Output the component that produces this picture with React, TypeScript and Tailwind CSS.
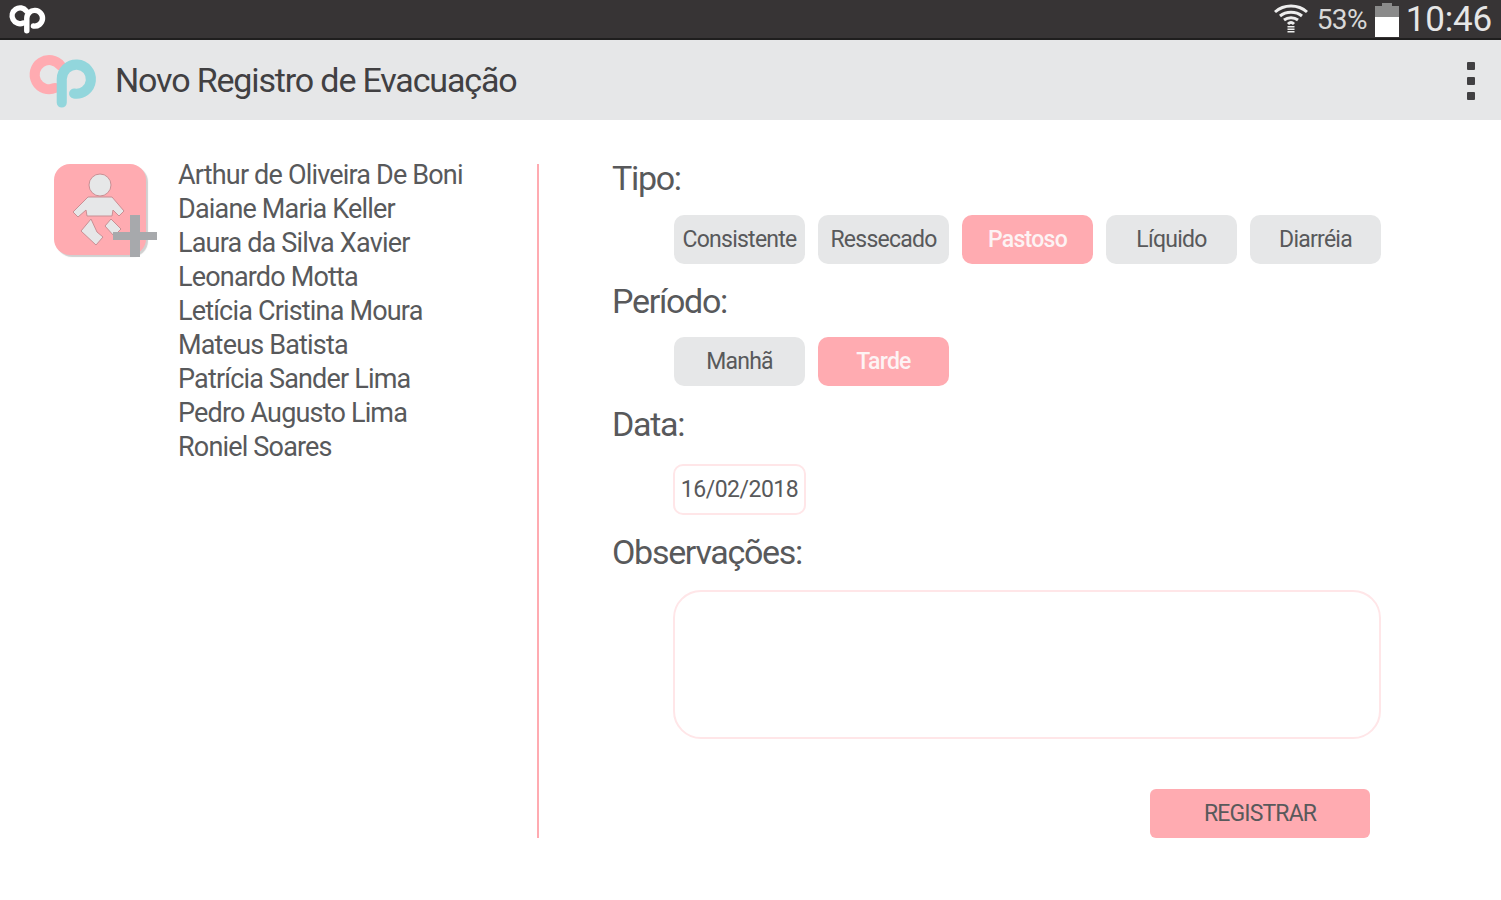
const names = [
  "Arthur de Oliveira De Boni",
  "Daiane Maria Keller",
  "Laura da Silva Xavier",
  "Leonardo Motta",
  "Letícia Cristina Moura",
  "Mateus Batista",
  "Patrícia Sander Lima",
  "Pedro Augusto Lima",
  "Roniel Soares",
];

function Logo({ size, a, b }: { size: number; a: string; b: string }) {
  return (
    <svg width={size} height={(size * 52) / 66} viewBox="0 0 66 52" fill="none" className="block">
      <path d="M25 33 A 13 13 0 1 1 30 13" stroke={a} strokeWidth="9" strokeLinecap="round" />
      <path d="M31 46 L 31 25 A 13 13 0 1 1 42 38" stroke={b} strokeWidth="9" strokeLinecap="round" />
    </svg>
  );
}

function Chip({ label, active }: { label: string; active?: boolean }) {
  return (
    <div
      className={`w-[131px] h-[49px] pt-[2px] rounded-[10px] flex items-center justify-center text-[23px] tracking-[-0.75px] ${
        active ? "bg-[#ffabb1] text-[#fdf3f4] font-medium" : "bg-[#e6e7e8] text-[#58595b]"
      }`}
    >
      {label}
    </div>
  );
}

function Label({ children }: { children: string }) {
  return <div className="text-[34px] leading-[40px] text-[#58595b] tracking-[-1.3px]">{children}</div>;
}

export default function App() {
  return (
    <div className="w-[1501px] h-[900px] bg-white overflow-hidden font-['Roboto',sans-serif]">
      <div className="h-[40px] bg-[#373435] border-b-[2px] border-[#1f1e1e] flex items-center justify-between pl-[8px] pr-[9px]">
        <Logo size={40} a="#ffffff" b="#ffffff" />
        <div className="flex items-center text-[#e6e6e6] pt-[2px]">
          <svg width="36" height="34" viewBox="0 0 36 32" fill="none" stroke="#eeeeee" strokeWidth="3" className="mr-[8px] -mt-[4px]">
            <path d="M2 10 C 11 2 25 2 34 10" />
            <path d="M7 14 C 13 9 23 9 29 14" />
            <path d="M11 18 C 15 15 21 15 25 18" />
            <path d="M15 22 C 17 20 19 20 21 22" />
            <path d="M18 24 L 18 31" strokeWidth="7" strokeDasharray="1.5 1" />
          </svg>
          <span className="text-[28px] tracking-[-0.6px] mr-[8px] text-[#d8d8d8] leading-[36px]">53%</span>
          <div className="w-[24px] h-[34px] flex flex-col items-center mr-[7px]">
            <div className="w-[10px] h-[3px] bg-[#8a8a8a]" />
            <div className="w-full h-[11px] bg-[#8a8a8a]" />
            <div className="w-full flex-1 bg-white" />
          </div>
          <span className="text-[35px] tracking-[-0.2px] leading-[36px]">10:46</span>
        </div>
      </div>

      <div className="h-[80px] bg-[#e6e7e8] flex items-center justify-between pl-[27px] pr-[26px]">
        <div className="flex items-center gap-[14px]">
          <Logo size={74} a="#ffabb1" b="#92d6dc" />
          <span className="text-[34px] text-[#414042] tracking-[-1.15px] leading-none">Novo Registro de Evacuação</span>
        </div>
        <div className="flex flex-col gap-[7px] mt-[2px]">
          <div className="w-[8px] h-[8px] bg-[#414042] rounded-[1px]" />
          <div className="w-[8px] h-[8px] bg-[#414042] rounded-[1px]" />
          <div className="w-[8px] h-[8px] bg-[#414042] rounded-[1px]" />
        </div>
      </div>

      <div className="flex pt-[44px]">
        <div className="w-[539px] h-[674px] border-r-[2px] border-[#ffabb1] flex items-start pl-[54px]">
          <div className="relative w-[92px] h-[91px] bg-[#ffabb1] rounded-[16px] shadow-[2px_2px_1px_#d0d0d0] mr-[32px] shrink-0">
            <svg width="110" height="100" viewBox="0 0 110 100" className="absolute left-0 top-0" fill="#e6e7e8">
              <g stroke="#c98f94" strokeWidth="1">
                <circle cx="46" cy="21" r="11" />
                <path d="M34 33 L58 33 L70 47 L65 52 L59 46 L58 52 L33 52 L32 46 L24 53 L19 48 Z" />
                <path d="M37 55 L27 67 L42 81 L49 73 L43 68 Z" />
                <path d="M57 55 L51 62 L60 72 L67 65 Z" />
              </g>
              <path d="M59 68 H 76 V 51 H 86 V 68 H 103 V 76 H 86 V 93 H 76 V 76 H 59 Z" fill="#a7a9ac" />
            </svg>
          </div>
          <div className="-mt-[6px] text-[27px] leading-[34px] text-[#58595b] tracking-[-0.82px] whitespace-nowrap">
            {names.map((n) => (
              <div key={n}>{n}</div>
            ))}
          </div>
        </div>

        <div className="pl-[73px] w-[843px] -mt-[6px] flex flex-col">
          <Label>Tipo:</Label>
          <div className="flex gap-[13px] pl-[62px] mt-[17px]">
            <Chip label="Consistente" />
            <Chip label="Ressecado" />
            <Chip label="Pastoso" active />
            <Chip label="Líquido" />
            <Chip label="Diarréia" />
          </div>
          <div className="mt-[17px]"><Label>Período:</Label></div>
          <div className="flex gap-[13px] pl-[62px] mt-[16px]">
            <Chip label="Manhã" />
            <Chip label="Tarde" active />
          </div>
          <div className="mt-[18px]"><Label>Data:</Label></div>
          <div className="pl-[61px] mt-[20px]">
            <div className="w-[133px] h-[51px] pt-[2px] rounded-[10px] border-[2px] border-[#ffe6e8] flex items-center justify-center text-[23px] tracking-[-0.5px] text-[#58595b]">
              16/02/2018
            </div>
          </div>
          <div className="mt-[17px]"><Label>Observações:</Label></div>
          <div className="pl-[61px] mt-[18px]">
            <div className="w-[708px] h-[149px] rounded-[28px] border-[2px] border-[#ffe6e8]" />
          </div>
          <div className="flex justify-end mt-[50px] pr-[12px]">
            <div className="w-[220px] h-[49px] pt-[2px] rounded-[6px] bg-[#ffabb1] flex items-center justify-center text-[23px] tracking-[-0.85px] text-[#58595b]">
              REGISTRAR
            </div>
          </div>
        </div>
      </div>
    </div>
  );
}
